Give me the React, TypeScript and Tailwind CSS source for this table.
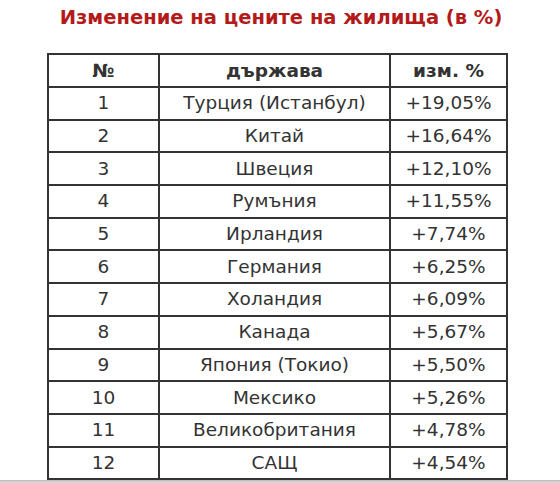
import React from "react";

const rows: [string, string, string][] = [
  ["1", "Турция (Истанбул)", "+19,05%"],
  ["2", "Китай", "+16,64%"],
  ["3", "Швеция", "+12,10%"],
  ["4", "Румъния", "+11,55%"],
  ["5", "Ирландия", "+7,74%"],
  ["6", "Германия", "+6,25%"],
  ["7", "Холандия", "+6,09%"],
  ["8", "Канада", "+5,67%"],
  ["9", "Япония (Токио)", "+5,50%"],
  ["10", "Мексико", "+5,26%"],
  ["11", "Великобритания", "+4,78%"],
  ["12", "САЩ", "+4,54%"],
];

export default function App() {
  return (
    <div
      className="w-[560px] h-[483px] bg-white overflow-hidden flex flex-col"
      style={{ fontFamily: '"DejaVu Sans", Verdana, sans-serif' }}
    >
      <h1 className="text-center text-[19.5px] font-bold text-[#b31b1b] leading-[24px] mt-[6px] pl-[2px]">
        Изменение на цените на жилища (в %)
      </h1>
      <div className="flex justify-start pl-[47px] mt-[23px]">
        <table className="border-collapse border-2 border-[#333] text-[#333] text-[18.5px]">
          <thead>
            <tr className="h-[33px]">
              <th className="w-[111px] border-2 border-[#333] font-bold text-center p-0 leading-[22px]">№</th>
              <th className="w-[231px] border-2 border-[#333] font-bold text-center p-0 leading-[22px]">държава</th>
              <th className="w-[117px] border-2 border-[#333] font-bold text-center p-0 leading-[22px]">изм. %</th>
            </tr>
          </thead>
          <tbody>
            {rows.map((r) => (
              <tr key={r[0]} className="h-[32.7px]">
                <td className="border-2 border-[#333] text-center p-0 leading-[22px]">{r[0]}</td>
                <td className="border-2 border-[#333] text-center p-0 leading-[22px]">{r[1]}</td>
                <td className="border-2 border-[#333] text-center p-0 leading-[22px]">{r[2]}</td>
              </tr>
            ))}
          </tbody>
        </table>
      </div>
      <div className="mt-auto h-[3px] bg-[#d3d3d3] border-t border-[#bdbdbd]" />
    </div>
  );
}
